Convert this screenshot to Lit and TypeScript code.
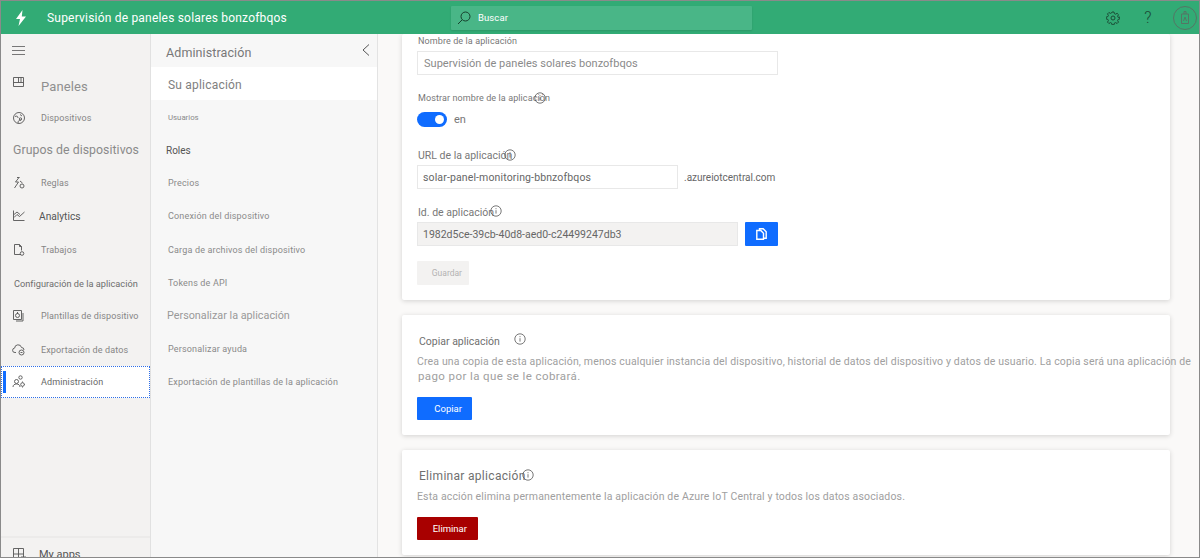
import { LitElement, html, css, svg, nothing } from "lit";
import { customElement } from "lit/decorators.js";

interface NavItem {
  label: string;
  icon?: ReturnType<typeof svg>;
  kind?: string;
}

const ICONS = {
  panels: svg`<path d="M1.5 1.5h10v9h-10zM6.5 1.5v5M1.5 6.5h10M9 1.5v5"/>`,
  devices: svg`<circle cx="7" cy="7" r="5.5"/><path d="M3 5.5c2-1 3 0 3 1.5M6 12c0-2 1-3 3-3M8 3.5l2 1.5"/><circle cx="8.5" cy="8" r="1.2"/>`,
  rules: svg`<path d="M7 1.5 3.5 6h3L2.5 12M7.5 1.5H5"/><circle cx="10" cy="10" r="2"/><path d="M8 5l2.5 2"/>`,
  analytics: svg`<path d="M1.5 1.5v10h11M2 8.5l3-3 2.5 2L12.5 3M2 5.5l3-2.5 3 2.5"/>`,
  jobs: svg`<path d="M9 11.5H2.5v-10h5l2 2v4"/><path d="M7.5 1.5v2h2"/><circle cx="10" cy="10.5" r="1.8"/>`,
  templates: svg`<path d="M1.5 1.5h8v9h-8zM11 4v8H4"/><circle cx="5.5" cy="6.5" r="2"/><path d="M5.5 3v2"/>`,
  exportData: svg`<path d="M4 9.5H3a2.2 2.2 0 0 1-.4-4.4A3.5 3.5 0 0 1 9.5 4.5 2.5 2.5 0 0 1 12 7"/><circle cx="9.5" cy="9.5" r="2.5"/><path d="M8.5 9.5h2"/>`,
  admin: svg`<circle cx="4.5" cy="6.5" r="2"/><path d="M1 12c0-2 1.5-3 3.5-3S8 10 8 12"/><circle cx="8.5" cy="2.5" r="1.7"/><circle cx="10.5" cy="9.5" r="1.8"/><path d="M10.5 6.5v1M10.5 11.5v1M13 9.5h-.7"/>`,
  apps: svg`<path d="M1.5 1.5h10v11h-10M1.5 1.5v11M6.5 1.5v11M1.5 7h10"/><path d="M9 10h5M9 12h5"/>`,
};

const NAV: NavItem[] = [
  { label: "Paneles", icon: ICONS.panels, kind: "large" },
  { label: "Dispositivos", icon: ICONS.devices },
  { label: "Grupos de dispositivos", kind: "group" },
  { label: "Reglas", icon: ICONS.rules, kind: "tight" },
  { label: "Analytics", icon: ICONS.analytics, kind: "strong" },
  { label: "Trabajos", icon: ICONS.jobs },
  { label: "Configuración de la aplicación", kind: "section" },
  { label: "Plantillas de dispositivo", icon: ICONS.templates },
  { label: "Exportación de datos", icon: ICONS.exportData, kind: "low" },
  { label: "Administración", icon: ICONS.admin, kind: "active" },
];

const SUB_ITEMS: { label: string; kind?: string }[] = [
  { label: "Su aplicación", kind: "current" },
  { label: "Usuarios", kind: "tiny" },
  { label: "Roles", kind: "dark" },
  { label: "Precios" },
  { label: "Conexión del dispositivo" },
  { label: "Carga de archivos del dispositivo" },
  { label: "Tokens de API" },
  { label: "Personalizar la aplicación", kind: "heading" },
  { label: "Personalizar ayuda" },
  { label: "Exportación de plantillas de la aplicación" },
];

const infoIcon = (cls: string) => html`
  <svg class="info ${cls}" viewBox="0 0 12 12" aria-hidden="true">
    <circle cx="6" cy="6" r="5.2"></circle>
    <path d="M6 5.2v3.4M6 3.2v1"></path>
  </svg>
`;

@customElement("app-root")
export class AppRoot extends LitElement {
  static styles = css`
    :host {
      display: block;
      width: 1200px;
      height: 558px;
      box-sizing: border-box;
      overflow: hidden;
      border: 1px solid #8a8a8a;
      font-family: Roboto, "Liberation Sans", sans-serif;
      background: #faf9f8;
      color: #777;
    }

    .shell {
      display: flex;
      flex-direction: column;
      height: 100%;
    }

    .topbar {
      flex: 0 0 33px;
      display: flex;
      align-items: center;
      background: #32ab75;
      color: #fff;
    }

    .brand {
      flex: 0 0 450px;
      display: flex;
      align-items: center;
      gap: 20px;
      padding-left: 14px;
      box-sizing: border-box;
      font-size: 12px;
      letter-spacing: 0.2px;
    }

    .brand svg {
      width: 12px;
      height: 16px;
      fill: #fff;
    }

    .search {
      flex: 0 0 301px;
      height: 24px;
      display: flex;
      align-items: center;
      gap: 7px;
      padding-left: 6px;
      box-sizing: border-box;
      background: #49b687;
      border-radius: 1px;
      box-shadow: 0 1px 2px rgba(0, 0, 0, 0.12);
      font-size: 9.5px;
      letter-spacing: 0.1px;
    }

    .search svg {
      width: 14px;
      height: 14px;
      fill: none;
      stroke: #17402d;
      stroke-width: 1;
    }

    .actions {
      margin-left: auto;
      display: flex;
      align-items: center;
      padding-right: 2px;
    }

    .gear {
      width: 14px;
      height: 14px;
      margin-right: 21px;
      fill: none;
      stroke: #1b4a35;
      stroke-width: 1;
    }

    .help {
      font-size: 16px;
      font-weight: 300;
      color: #1b4a35;
      width: 14px;
      margin-right: 18px;
      text-align: center;
    }

    .avatar {
      width: 24px;
      height: 24px;
      fill: none;
      stroke: #557565;
      stroke-width: 1;
    }

    .body {
      flex: 1;
      display: flex;
      min-height: 0;
    }

    .nav {
      flex: 0 0 149px;
      min-width: 0;
      display: flex;
      flex-direction: column;
      background: #f3f2f1;
      border-right: 1px solid #e1e1e1;
    }

    .burger {
      flex: 0 0 35.5px;
      display: flex;
      align-items: center;
      padding: 0 0 3px 11px;
      box-sizing: border-box;
    }

    .burger svg {
      width: 13px;
      height: 9px;
      stroke: #777;
      stroke-width: 1;
    }

    .nav-item {
      flex: 0 0 32.9px;
      display: flex;
      align-items: center;
      padding-bottom: 1px;
      box-sizing: border-box;
      font-size: 9px;
      letter-spacing: 0.12px;
      white-space: nowrap;
      color: #858585;
    }

    .nav-icon {
      flex: 0 0 14px;
      width: 14px;
      height: 14px;
      margin: 0 15px 0 11px;
      fill: none;
      stroke: #555;
      stroke-width: 0.9;
    }

    .nav-item.large {
      padding: 2px 0 0;
      font-size: 13px;
      letter-spacing: 0.1px;
      color: #8f8f8f;
    }

    .nav-item.large .nav-icon {
      margin-bottom: 7px;
    }

    .nav-item.group {
      padding: 0 0 3px 12px;
      font-size: 12.3px;
      letter-spacing: 0.05px;
      color: #8a8a8a;
    }

    .nav-item.tight {
      padding-bottom: 3px;
    }

    .nav-item.section {
      padding: 0 0 0 13px;
      font-size: 9.2px;
      letter-spacing: 0.02px;
      color: #6d6d6d;
    }

    .nav-item.strong {
      padding-bottom: 3px;
      font-size: 10.2px;
      letter-spacing: 0;
      color: #555;
    }

    .nav-item.strong .nav-icon {
      margin-right: 13px;
    }

    .nav-item.low {
      padding: 2px 0 0;
    }

    .nav-item.active {
      position: relative;
      padding: 1px 0 0;
      background: #fff;
      outline: 1px dotted #2f6fe8;
      outline-offset: -1px;
      color: #666;
    }

    .nav-item.active::before {
      content: "";
      position: absolute;
      left: 2px;
      top: 5px;
      bottom: 5px;
      width: 3px;
      background: #0f6cff;
    }

    .nav-spacer {
      flex: 1;
    }

    .nav-foot {
      flex: 0 0 21px;
      min-height: 0;
      overflow: hidden;
      display: flex;
      align-items: flex-start;
      padding-top: 10px;
      box-sizing: border-box;
      border-top: 2px solid #ecebea;
      font-size: 11px;
      color: #555;
      white-space: nowrap;
    }

    .nav-foot .nav-icon {
      margin: -1px 13px 0 11px;
    }

    .subnav {
      flex: 0 0 226px;
      background: #f7f7f7;
      border-right: 1px solid #e3e3e3;
    }

    .subnav-head {
      height: 33px;
      display: flex;
      align-items: center;
      justify-content: space-between;
      padding: 3px 7px 0 15px;
      box-sizing: border-box;
      font-size: 12.5px;
      letter-spacing: 0.1px;
      color: #777;
    }

    .subnav-head svg {
      width: 8px;
      height: 12px;
      margin-bottom: 5px;
      fill: none;
      stroke: #555;
      stroke-width: 1;
    }

    .sub-item {
      height: 33.1px;
      box-sizing: border-box;
      display: flex;
      align-items: center;
      padding: 1px 0 0 17px;
      font-size: 9px;
      letter-spacing: 0.17px;
      color: #8a8a8a;
      white-space: nowrap;
    }

    .sub-item.current {
      padding-top: 2px;
      background: #fff;
      font-size: 12px;
      letter-spacing: 0.2px;
      color: #808080;
    }

    .sub-item.tiny {
      font-size: 7.8px;
      letter-spacing: 0;
    }

    .sub-item.dark {
      padding-left: 15px;
      color: #555;
      font-size: 10px;
      letter-spacing: 0;
    }

    .sub-item.heading {
      padding-left: 16px;
      font-size: 10.8px;
      letter-spacing: 0;
      color: #999;
    }

    .main {
      flex: 1;
      min-width: 0;
      display: flex;
      flex-direction: column;
      gap: 15px;
      padding-left: 24px;
      overflow: hidden;
    }

    .card {
      flex: none;
      width: 768px;
      box-sizing: border-box;
      padding-left: 15px;
      background: #fff;
      border-radius: 2px;
      box-shadow: 0 1px 5px rgba(0, 0, 0, 0.16);
    }

    .card-settings {
      height: 266px;
      padding-top: 1px;
    }

    .card-copy {
      height: 120px;
      padding-top: 19px;
    }

    .card-delete {
      height: 105px;
      padding-top: 19px;
    }

    .label {
      display: flex;
      align-items: center;
      height: 12px;
      padding-left: 1px;
      font-size: 9px;
      letter-spacing: 0.1px;
      color: #777;
      white-space: nowrap;
    }

    .label.wide {
      font-size: 10.5px;
      letter-spacing: 0;
    }

    .label-show {
      margin-top: 17px;
    }

    .label-url {
      margin-top: 22px;
    }

    .label-id {
      margin-top: 17px;
    }

    .info {
      flex: none;
      width: 12px;
      height: 12px;
      fill: none;
      stroke: #555;
      stroke-width: 0.8;
    }

    .info.over-show {
      margin-left: -16px;
    }

    .info.over-url {
      margin-left: -8px;
    }

    .info.over-id {
      margin: -3px 0 0 -4px;
    }

    .info.after-copy {
      margin: -4px 0 0 14px;
    }

    .info.over-delete {
      margin: -2px 0 0 -4px;
    }

    .field {
      box-sizing: border-box;
      height: 24px;
      display: flex;
      align-items: center;
      padding-left: 5px;
      border: 1px solid #e8e8e8;
      font-size: 10.5px;
      letter-spacing: 0.13px;
      color: #666;
      background: #fff;
      white-space: nowrap;
    }

    .field-name {
      width: 361px;
      margin-top: 4px;
      padding-left: 6px;
      color: #8a8a8a;
      font-size: 11px;
      letter-spacing: 0.03px;
    }

    .toggle-row {
      display: flex;
      align-items: center;
      gap: 7px;
      margin-top: 8px;
      font-size: 11px;
      color: #777;
    }

    .toggle {
      position: relative;
      width: 30px;
      height: 15px;
      border-radius: 8px;
      background: #0f6cff;
    }

    .toggle::after {
      content: "";
      position: absolute;
      right: 3px;
      top: 3px;
      width: 9px;
      height: 9px;
      border-radius: 50%;
      background: #fff;
    }

    .row {
      display: flex;
      align-items: center;
      margin-top: 4px;
    }

    .field-url {
      width: 261px;
    }

    .suffix {
      margin-left: 6px;
      font-size: 10px;
      color: #666;
      white-space: nowrap;
    }

    .field-id {
      width: 321px;
      background: #f3f2f1;
      letter-spacing: 0;
    }

    .copy-id {
      width: 33px;
      height: 24px;
      margin-left: 7px;
      display: flex;
      align-items: center;
      justify-content: center;
      background: #0f6cff;
      border-radius: 1px;
    }

    .copy-id svg {
      width: 11px;
      height: 12px;
      fill: none;
      stroke: #fff;
      stroke-width: 1.4;
    }

    .btn {
      box-sizing: border-box;
      height: 23px;
      display: flex;
      align-items: center;
      justify-content: flex-end;
      font-size: 9.5px;
      border-radius: 1px;
    }

    .btn-save {
      width: 52px;
      height: 24px;
      margin-top: 15px;
      padding-right: 7px;
      background: #f3f2f1;
      color: #b3b3b3;
      font-size: 8.5px;
    }

    .btn-copy {
      width: 55px;
      margin-top: 12px;
      padding-right: 10px;
      background: #0f6cff;
      color: #fff;
    }

    .btn-delete {
      width: 61px;
      margin-top: 13px;
      padding-right: 11px;
      background: #a80000;
      color: #fff;
    }

    .card-title {
      display: flex;
      align-items: center;
      height: 14px;
      padding-left: 2px;
      font-size: 10.5px;
      color: #6f6f6f;
      white-space: nowrap;
    }

    .card-delete .card-title {
      font-size: 12px;
      letter-spacing: 0.3px;
    }

    .desc {
      margin-top: 7px;
      font-size: 10.5px;
      letter-spacing: 0.15px;
      line-height: 14.5px;
      color: #a0a0a0;
      white-space: nowrap;
    }

    .card-delete .desc {
      margin-top: 6px;
      line-height: 15px;
    }

    .desc-second {
      position: relative;
      top: -1px;
      font-size: 11.5px;
      letter-spacing: 0.4px;
      padding-left: 1px;
    }
  `;

  private _renderNavItem(item: NavItem) {
    return html`
      <div class="nav-item ${item.kind ?? ""}">
        ${item.icon
          ? html`<svg class="nav-icon" viewBox="0 0 14 14">${item.icon}</svg>`
          : nothing}
        ${item.label}
      </div>
    `;
  }

  render() {
    return html`
      <div class="shell">
        <header class="topbar">
          <div class="brand">
            <svg viewBox="0 0 12 16"><path d="M7.5 0 1 9h4l-1.5 7L11 6.5H6.8z"></path></svg>
            Supervisión de paneles solares bonzofbqos
          </div>
          <div class="search">
            <svg viewBox="0 0 14 14">
              <circle cx="8.5" cy="5.5" r="4.5"></circle>
              <path d="M5.3 8.7 1 13"></path>
            </svg>
            Buscar
          </div>
          <div class="actions">
            <svg class="gear" viewBox="0 0 14 14">
              <circle cx="7" cy="7" r="2"></circle>
              <path d="M6 1h2l.4 1.7 1.2.5 1.5-.9 1.4 1.4-.9 1.5.5 1.2L13.8 6v2l-1.7.4-.5 1.2.9 1.5-1.4 1.4-1.5-.9-1.2.5L8 13.8H6l-.4-1.7-1.2-.5-1.5.9-1.4-1.4.9-1.5-.5-1.2L.2 8V6l1.7-.4.5-1.2-.9-1.5 1.4-1.4 1.5.9 1.2-.5z"></path>
            </svg>
            <span class="help">?</span>
            <svg class="avatar" viewBox="0 0 24 24">
              <circle cx="12" cy="12" r="11.5"></circle>
              <path d="M8.5 8h7v9.5h-7zM11 8V5.5h2V8M10.5 15l1.5-4 1.5 4"></path>
            </svg>
          </div>
        </header>
        <div class="body">
          <nav class="nav">
            <div class="burger">
              <svg viewBox="0 0 13 9"><path d="M0 .5h13M0 4.5h13M0 8.5h13"></path></svg>
            </div>
            ${NAV.map((item) => this._renderNavItem(item))}
            <div class="nav-spacer"></div>
            <div class="nav-foot">
              <svg class="nav-icon" viewBox="0 0 14 14">${ICONS.apps}</svg>
              My apps
            </div>
          </nav>
          <aside class="subnav">
            <div class="subnav-head">
              Administración
              <svg viewBox="0 0 8 12"><path d="M7 .5 1 6l6 5.5"></path></svg>
            </div>
            ${SUB_ITEMS.map(
              (item) => html`<div class="sub-item ${item.kind ?? ""}">${item.label}</div>`
            )}
          </aside>
          <main class="main">
            <section class="card card-settings">
              <div class="label">Nombre de la aplicación</div>
              <div class="field field-name">Supervisión de paneles solares bonzofbqos</div>
              <div class="label label-show">
                Mostrar nombre de la aplicación${infoIcon("over-show")}
              </div>
              <div class="toggle-row"><span class="toggle"></span>en</div>
              <div class="label wide label-url">URL de la aplicación${infoIcon("over-url")}</div>
              <div class="row">
                <div class="field field-url">solar-panel-monitoring-bbnzofbqos</div>
                <div class="suffix">.azureiotcentral.com</div>
              </div>
              <div class="label wide label-id">Id. de aplicación${infoIcon("over-id")}</div>
              <div class="row">
                <div class="field field-id">1982d5ce-39cb-40d8-aed0-c24499247db3</div>
                <div class="copy-id">
                  <svg viewBox="0 0 11 12"><path d="M3.5 2.5V.8h3.7l3 3v6.4H7.5M.8 2.5h4l2.7 2.7v6H.8z"></path></svg>
                </div>
              </div>
              <div class="btn btn-save">Guardar</div>
            </section>
            <section class="card card-copy">
              <div class="card-title">Copiar aplicación${infoIcon("after-copy")}</div>
              <div class="desc">
                Crea una copia de esta aplicación, menos cualquier instancia del dispositivo, historial de datos del dispositivo y datos de usuario. La copia será una aplicación de<br />
                <span class="desc-second">pago por la que se le cobrará.</span>
              </div>
              <div class="btn btn-copy">Copiar</div>
            </section>
            <section class="card card-delete">
              <div class="card-title">Eliminar aplicación${infoIcon("over-delete")}</div>
              <div class="desc">
                Esta acción elimina permanentemente la aplicación de Azure IoT Central y todos los datos asociados.
              </div>
              <div class="btn btn-delete">Eliminar</div>
            </section>
          </main>
        </div>
      </div>
    `;
  }
}

declare global {
  interface HTMLElementTagNameMap {
    "app-root": AppRoot;
  }
}
